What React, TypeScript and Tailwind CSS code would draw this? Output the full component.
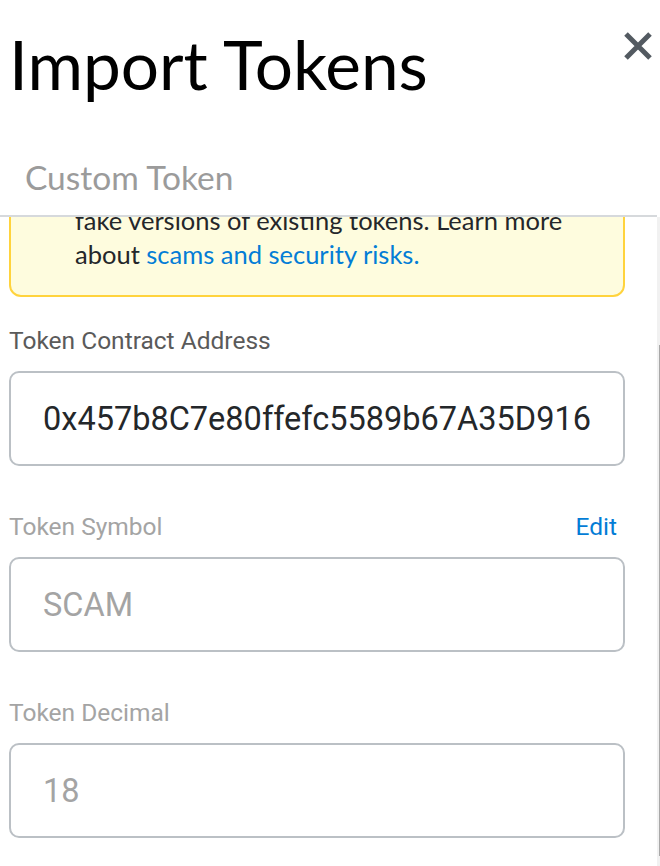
import React from "react";

const euclid = { fontFamily: "Lato, 'Open Sans', sans-serif" };
const roboto = { fontFamily: "Roboto, 'Liberation Sans', sans-serif" };

function Field({
  label,
  labelClass,
  value,
  valueClass,
  edit,
}: {
  label: string;
  labelClass: string;
  value: string;
  valueClass: string;
  edit?: boolean;
}) {
  return (
    <div className="flex flex-col w-[616px]">
      <div className="flex items-center justify-between pr-[8px]">
        <span className={`text-[24.5px] leading-[26px] ${labelClass}`} style={roboto}>
          {label}
        </span>
        {edit && (
          <span className="text-[24.5px] leading-[26px] text-[#037dd6]" style={roboto}>
            Edit
          </span>
        )}
      </div>
      <div className="mt-[17px] h-[95px] w-[616px] rounded-[10px] border-2 border-[#bbc0c5] flex items-center pl-[32px]">
        <span className={`text-[32.5px] leading-[36px] ${valueClass}`} style={roboto}>
          {value}
        </span>
      </div>
    </div>
  );
}

export default function App() {
  return (
    <div className="w-[660px] h-[866px] bg-white flex flex-col overflow-hidden">
      {/* Header */}
      <div className="h-[215px] flex flex-col shrink-0">
        <div className="flex justify-between items-start">
          <h1
            className="pl-[9px] pt-[26px] text-[67.5px] leading-[76px] text-black font-normal"
            style={euclid}
          >
            Import Tokens
          </h1>
          <div className="pt-[30px] pr-[6px]">
            <svg width="32" height="32" viewBox="0 0 32 32">
              <path d="M4 4 L28 28 M28 4 L4 28" stroke="#535a61" strokeWidth="5" strokeLinecap="butt" />
            </svg>
          </div>
        </div>
        <div
          className="pl-[25px] mt-[58px] text-[33.5px] leading-[34px] text-[#9b9b9b]"
          style={euclid}
        >
          Custom Token
        </div>
      </div>
      <div className="h-[2px] bg-[#d6d9dc] w-[657px] shrink-0" />
      {/* Body */}
      <div className="flex flex-1 min-h-0">
        <div className="flex-1 overflow-hidden">
          <div className="-mt-[62px] pl-[9px] flex flex-col">
            <div className="w-[616px] rounded-[12px] border-2 border-[#ffd33d] bg-[#fefcde] flex pt-[12px] pb-[24px]">
              <div className="w-[64px] shrink-0" />
              <div className="text-[25.5px] leading-[34px] text-[#24272a] whitespace-nowrap" style={euclid}>
                <div>Anyone can create a token, including creating</div>
                <div>fake versions of existing tokens. Learn more</div>
                <div>
                  about <span className="text-[#037dd6]">scams and security risks.</span>
                </div>
              </div>
            </div>
            <div className="mt-[31px] flex flex-col gap-[48px]">
              <Field
                label="Token Contract Address"
                labelClass="text-[#5a5a5a]"
                value="0x457b8C7e80ffefc5589b67A35D916"
                valueClass="text-[#24272a]"
              />
              <Field
                label="Token Symbol"
                labelClass="text-[#a4a4a4]"
                value="SCAM"
                valueClass="text-[#a4a4a4]"
                edit
              />
              <Field
                label="Token Decimal"
                labelClass="text-[#a4a4a4]"
                value="18"
                valueClass="text-[#a4a4a4]"
              />
            </div>
          </div>
        </div>
        {/* scrollbar */}
        <div className="w-[3px] bg-[#f1f1f1] flex flex-col">
          <div className="h-[128px]" />
          <div className="flex-1 flex justify-end mb-[10px]">
            <div className="w-[1px] bg-[#a8a8a8]" />
          </div>
        </div>
      </div>
    </div>
  );
}
